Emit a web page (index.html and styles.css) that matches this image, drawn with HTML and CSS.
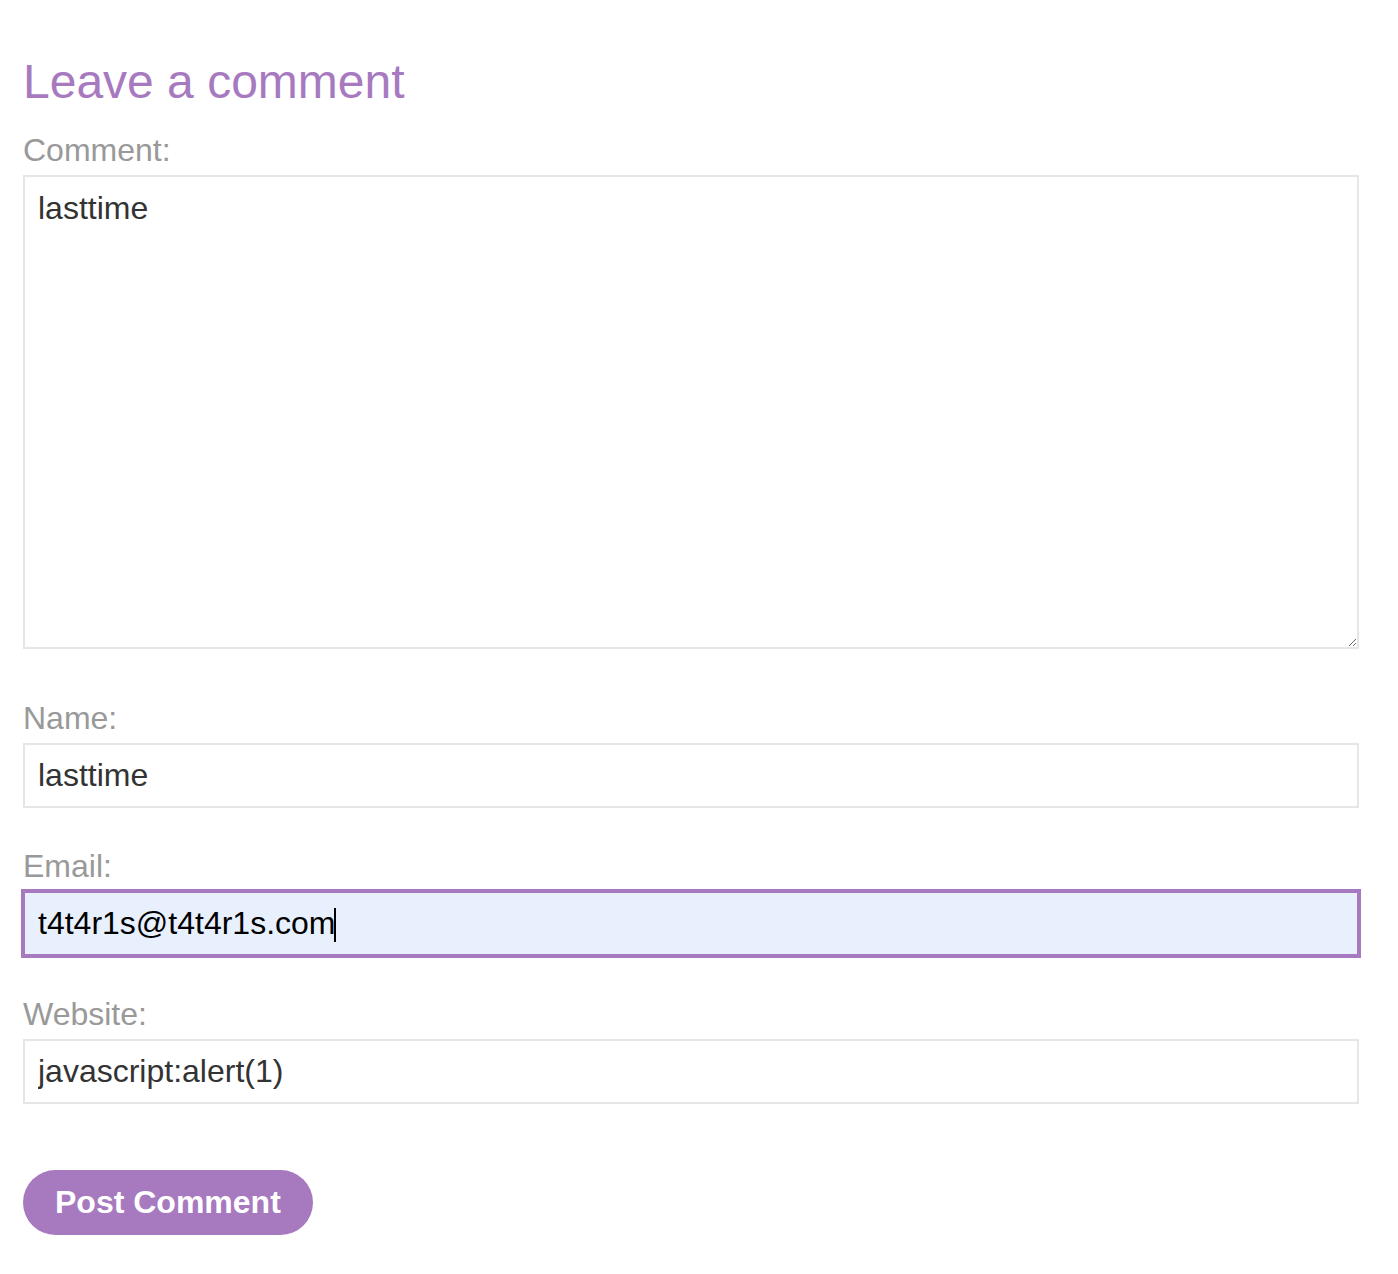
FILE: index.html
```html
<!DOCTYPE html>
<html lang="en">
<head>
<meta charset="utf-8">
<title>Leave a comment</title>
<link rel="stylesheet" href="styles.css">
</head>
<body>
<section class="comment-form">
  <h2 class="title">Leave a comment</h2>
  <form class="form">
    <label class="label" for="comment">Comment:</label>
    <textarea class="field textarea" id="comment">lasttime</textarea>
    <label class="label" for="name">Name:</label>
    <input class="field input" id="name" type="text" value="lasttime">
    <label class="label" for="email">Email:</label>
    <div class="focus-wrap">
      <input class="field input input-focused" id="email" type="text" value="t4t4r1s@t4t4r1s.com">
      <span class="caret"></span>
    </div>
    <label class="label" for="website">Website:</label>
    <input class="field input" id="website" type="text" value="javascript:alert(1)">
    <div class="actions">
      <button class="button" type="button">Post Comment</button>
    </div>
  </form>
</section>
</body>
</html>
```

FILE: styles.css
```css
html, body {
  margin: 0;
  padding: 0;
  background: #ffffff;
}

body {
  font-family: "Liberation Sans", Arial, Helvetica, sans-serif;
}

.comment-form {
  width: 1336px;
  margin-left: 23px;
  padding-top: 54px;
}

.title {
  margin: 0 0 23px 0;
  font-size: 48px;
  font-weight: normal;
  line-height: 55px;
  color: #a779bf;
}

.form {
  display: flex;
  flex-direction: column;
}

.label {
  display: block;
  font-size: 32px;
  line-height: 37px;
  color: #999999;
  margin-bottom: 6px;
}

.field {
  box-sizing: border-box;
  width: 100%;
  margin: 0;
  font-family: "Liberation Sans", Arial, Helvetica, sans-serif;
  font-size: 32px;
  color: #333333;
  background: #ffffff;
  border: 2px solid #e6e6e6;
  outline: none;
}

.textarea {
  display: block;
  height: 474px;
  padding: 13px 13px;
  line-height: 37px;
  resize: vertical;
  margin-bottom: 51px;
}

.input {
  display: block;
  height: 65px;
  padding: 0 13px;
  margin-bottom: 40px;
}

.focus-wrap {
  position: relative;
  margin-bottom: 40px;
}

.input-focused {
  margin-bottom: 0;
  background: #e8f0fe;
  color: #000000;
  border: 2px solid #a779bf;
  box-shadow: 0 0 0 2px #a779bf;
}

.caret {
  position: absolute;
  left: 311px;
  top: 17px;
  width: 2px;
  height: 34px;
  background: #000000;
}

.actions {
  padding-top: 26px;
}

.button {
  height: 65px;
  padding: 0 32px;
  border: none;
  border-radius: 33px;
  background: #a779bf;
  color: #ffffff;
  font-family: "Liberation Sans", Arial, Helvetica, sans-serif;
  font-size: 32px;
  font-weight: bold;
  cursor: pointer;
}
```
